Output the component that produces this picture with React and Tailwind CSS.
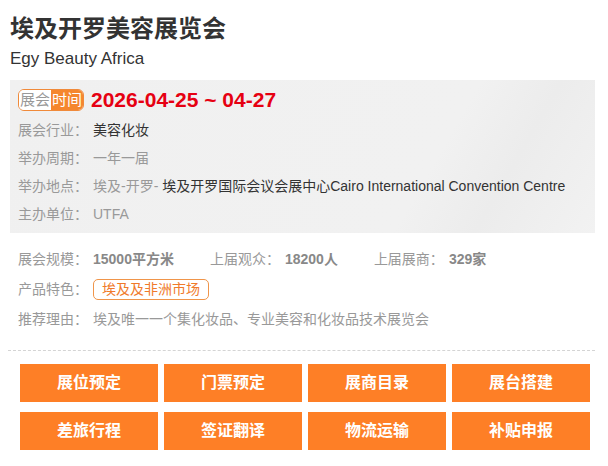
import React from 'react';

const font = { fontFamily: '"Liberation Sans", "Noto Sans CJK SC", sans-serif' };

const infoRows = [
  { label: '展会行业：', parts: [{ text: '美容化妆', dark: true }] },
  { label: '举办周期：', parts: [{ text: '一年一届' }] },
  {
    label: '举办地点：',
    parts: [
      { text: '埃及-开罗- ' },
      { text: '埃及开罗国际会议会展中心Cairo International Convention Centre', dark: true },
    ],
  },
  { label: '主办单位：', parts: [{ text: 'UTFA' }] },
];

const stats = [
  { label: '展会规模：', value: '15000', unit: '平方米' },
  { label: '上届观众：', value: '18200', unit: '人' },
  { label: '上届展商：', value: '329', unit: '家' },
];

const actions = ['展位预定', '门票预定', '展商目录', '展台搭建', '差旅行程', '签证翻译', '物流运输', '补贴申报'];

export default function App() {
  return (
    <div className="w-[608px] h-[466px] bg-white overflow-hidden" style={font}>
      {/* heading */}
      <div className="px-[10px] pt-[13px]">
        <h1 className="text-[24px] leading-[32px] font-bold text-[#333]">埃及开罗美容展览会</h1>
        <p className="mt-[2px] text-[17px] leading-[24px] text-[#333]">Egy Beauty Africa</p>
      </div>

      {/* main info box */}
      <div className="ml-[10px] mt-[9px] w-[585px] bg-[linear-gradient(120deg,#f0f0f0_0%,#f1f1f1_70%,#ececec_82%,#f2f2f2_100%)] px-[8px] pt-[9px] pb-[5px]">
        <div className="flex items-center h-[22px] mb-[5px]">
          <div className="flex h-[22px] border border-[#f08a3a] rounded-[6px] overflow-hidden text-[15px] leading-[20px]">
            <span className="w-[32px] text-center bg-white text-[#999]">展会</span>
            <span className="w-[32px] text-center bg-[#f5862e] text-white">时间</span>
          </div>
          <span className="ml-[7px] text-[21px] font-bold text-[#e60012] leading-[22px]">2026-04-25 ~ 04-27</span>
        </div>
        {infoRows.map((row) => (
          <div key={row.label} className="flex h-[28px] items-center text-[14px] whitespace-nowrap">
            <span className="w-[75px] text-[#999]">{row.label}</span>
            <span>
              {row.parts.map((p, i) => (
                <span key={i} className={p.dark ? 'text-[#333]' : 'text-[#999]'}>
                  {p.text}
                </span>
              ))}
            </span>
          </div>
        ))}
      </div>

      {/* stats */}
      <div className="px-[18px] pt-[11px] text-[14px]">
        <div className="flex h-[30px] items-center gap-[36px]">
          {stats.map((s) => (
            <div key={s.label} className="flex items-center whitespace-nowrap">
              <span className="w-[75px] text-[#999]">{s.label}</span>
              <span className="font-bold text-[#888]">
                {s.value}
                {s.unit}
              </span>
            </div>
          ))}
        </div>
        <div className="flex h-[30px] items-center">
          <span className="w-[75px] text-[#999]">产品特色：</span>
          <span className="h-[21px] px-[8px] border border-[#f0954a] rounded-[5px] text-[#f07a2a] leading-[19px]">
            埃及及非洲市场
          </span>
        </div>
        <div className="flex h-[30px] items-center">
          <span className="w-[75px] text-[#999]">推荐理由：</span>
          <span className="text-[#999]">埃及唯一一个集化妆品、专业美容和化妆品技术展览会</span>
        </div>
      </div>

      <div className="ml-[8px] mt-[16px] w-[587px] border-t border-dashed border-[#d4d4d4]" />

      {/* actions */}
      <div className="ml-[20px] mt-[13px] w-[570px] grid grid-cols-4 gap-x-[6px] gap-y-[10px]">
        {actions.map((a) => (
          <button
            key={a}
            className="h-[38px] bg-[#fe7f26] text-white text-[16px] font-bold flex items-center justify-center"
          >
            {a}
          </button>
        ))}
      </div>
    </div>
  );
}
